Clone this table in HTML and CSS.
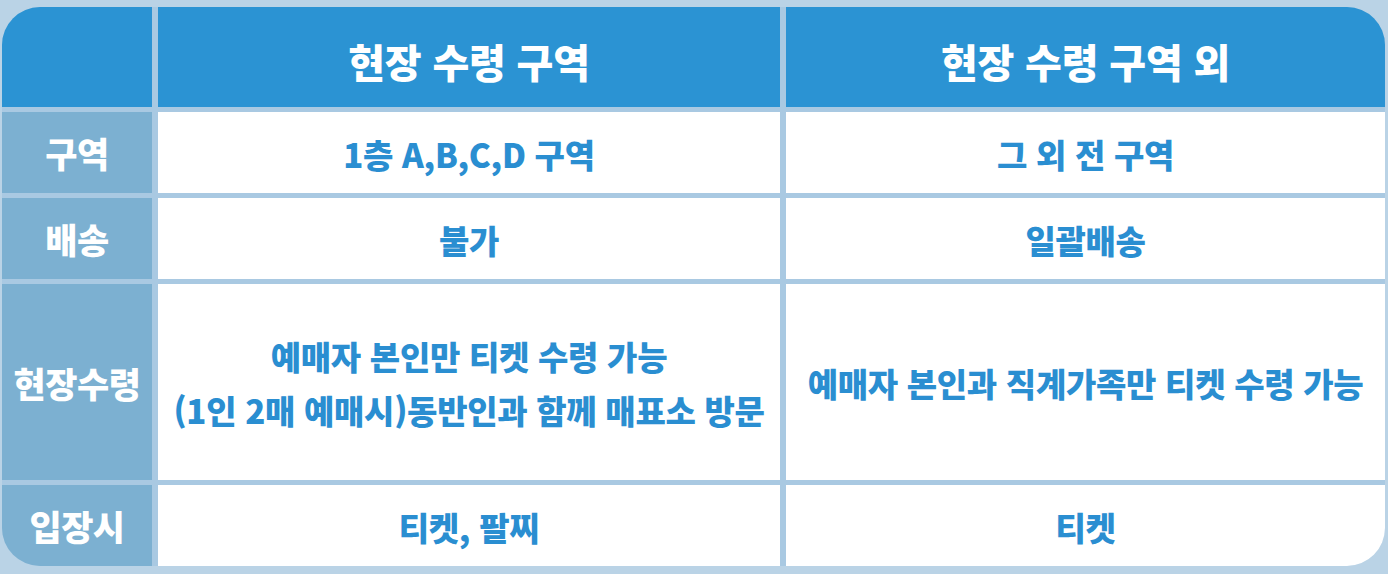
FILE: index.html
```html
<!DOCTYPE html>
<html lang="ko">
<head>
<meta charset="utf-8">
<title>현장 수령 안내</title>
<link rel="stylesheet" href="styles.css">
</head>
<body>
<div class="page">
  <div class="table">
    <div class="cell head corner"></div>
    <div class="cell head">현장 수령 구역</div>
    <div class="cell head">현장 수령 구역 외</div>

    <div class="cell label">구역</div>
    <div class="cell body">1층 A,B,C,D 구역</div>
    <div class="cell body">그 외 전 구역</div>

    <div class="cell label">배송</div>
    <div class="cell body">불가</div>
    <div class="cell body">일괄배송</div>

    <div class="cell label">현장수령</div>
    <div class="cell body multi">예매자 본인만 티켓 수령 가능<br>(1인 2매 예매시)동반인과 함께 매표소 방문</div>
    <div class="cell body">예매자 본인과 직계가족만 티켓 수령 가능</div>

    <div class="cell label">입장시</div>
    <div class="cell body">티켓, 팔찌</div>
    <div class="cell body">티켓</div>
  </div>
</div>
</body>
</html>
```

FILE: styles.css
```css
html, body {
  margin: 0;
  padding: 0;
}
body {
  background: #bad3e6;
  font-family: "Noto Sans CJK KR", "Noto Sans", sans-serif;
  width: 1388px;
  height: 574px;
  overflow: hidden;
}
.page {
  padding: 7px 3px 0 2px;
}
.table {
  width: 1383px;
  height: 559px;
  display: grid;
  grid-template-columns: 150px 622px 1fr;
  grid-template-rows: 100px 81px 81px 196px 81px;
  gap: 5px 6px;
  background: #a9c9e2;
  border-radius: 38px;
  overflow: hidden;
}
.cell {
  display: flex;
  align-items: center;
  justify-content: center;
  text-align: center;
  font-weight: 800;
  white-space: nowrap;
}
.head {
  background: #2b93d3;
  color: #ffffff;
  font-size: 40px;
  padding-top: 8px;
  letter-spacing: -0.2px;
}
.label {
  background: #7cb0d1;
  color: #ffffff;
  font-size: 35px;
  letter-spacing: -0.5px;
}
.body {
  background: #ffffff;
  color: #2a8ed1;
  font-size: 33px;
  letter-spacing: -0.3px;
  padding-top: 2px;
}
.multi {
  line-height: 54px;
}
```
